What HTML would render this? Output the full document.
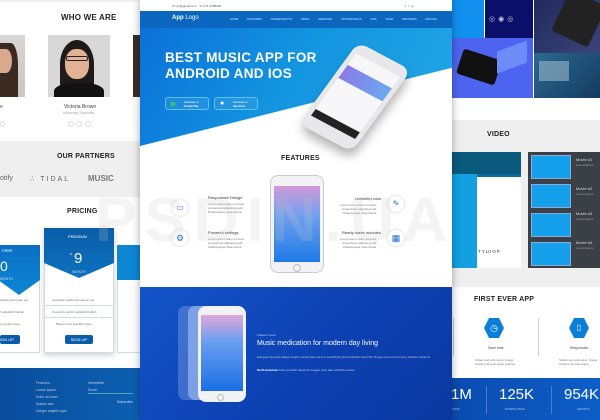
<!DOCTYPE html>
<html><head><meta charset="utf-8"><style>
*{margin:0;padding:0;box-sizing:border-box}
body{width:600px;height:420px;overflow:hidden;position:relative;background:#fff;font-family:"Liberation Sans",sans-serif}
.a{position:absolute}
.h{font-family:"Liberation Sans Narrow","Liberation Sans",sans-serif;font-weight:bold;color:#222;letter-spacing:.2px}
.t{font-size:4px;color:#777}
</style></head><body>
<!-- LEFT PANEL -->
<div class="a" style="left:0;top:0;width:141px;height:420px;background:#fff;box-shadow:2px 0 6px rgba(0,0,0,.3);z-index:2">
 <div class="a" style="left:0;top:0;width:141px;height:2px;background:#eee"></div>
 <div class="a h" style="left:61px;top:13px;font-size:8px">WHO WE ARE</div>
 <div class="a" style="left:0;top:35px;width:25px;height:62px;background:linear-gradient(#d8d6d4,#c9c5c1)"><div class="a" style="left:0;top:8px;width:18px;height:54px;background:#3a2a22;border-radius:0 40% 0 0"></div><div class="a" style="left:0;top:14px;width:12px;height:24px;background:#d9a98e;border-radius:0 50% 50% 0"></div></div>
 <div class="a" style="left:48px;top:35px;width:62px;height:62px;background:#d8d8d8;overflow:hidden">
  <div class="a" style="left:12px;top:5px;width:34px;height:48px;background:#1d1a19;border-radius:50% 50% 10% 10%"></div>
  <div class="a" style="left:17px;top:14px;width:24px;height:30px;background:#e2b297;border-radius:45%"></div>
  <div class="a" style="left:18px;top:21px;width:22px;height:5px;border:1.5px solid #222;border-radius:2px"></div>
  <div class="a" style="left:6px;top:48px;width:50px;height:20px;background:#111;border-radius:40% 40% 0 0"></div>
 </div>
 <div class="a" style="left:133px;top:35px;width:8px;height:62px;background:#3a2d28"></div>
 <div class="a t" style="left:64px;top:104px;font-size:5px;color:#444">Victoria Brown</div>
 <div class="a t" style="left:63px;top:111px;font-size:3.5px;color:#aaa">Marketing Specialist</div>
 <div class="a t" style="left:0;top:104px;font-size:5px;color:#444">e</div>
 <div class="a" style="left:68px;top:121px;width:6px;height:6px;border:1px solid #ddd;border-radius:50%"></div>
 <div class="a" style="left:76px;top:121px;width:6px;height:6px;border:1px solid #ddd;border-radius:50%"></div>
 <div class="a" style="left:85px;top:121px;width:6px;height:6px;border:1px solid #ddd;border-radius:50%"></div>
 <div class="a" style="left:0;top:121px;width:5px;height:6px;border:1px solid #ddd;border-radius:50%"></div>
 <div class="a" style="left:0;top:141px;width:141px;height:56px;background:#efefef"></div>
 <div class="a h" style="left:57px;top:153px;font-size:7px">OUR PARTNERS</div>
 <div class="a" style="left:0;top:175px;font-size:7px;color:#666">otify</div>
 <div class="a" style="left:30px;top:175px;font-size:7px;color:#666;letter-spacing:2px">∴ TIDAL</div>
 <div class="a" style="left:88px;top:174px;font-size:8px;color:#777;font-weight:bold"> MUSIC</div>
 <div class="a h" style="left:67px;top:208px;font-size:7px">PRICING</div>
 <div class="a" style="left:-2px;top:245px;width:42px;height:108px;background:#fff;border:1px solid #cfdbe8"></div>
 <div class="a" style="left:-2px;top:245px;width:42px;height:50px;background:linear-gradient(#0b6fc4,#0d86d4);clip-path:polygon(0 0,100% 0,100% 70%,50% 100%,0 70%)"></div>
 <div class="a" style="left:2px;top:248px;font-size:4px;color:#fff">FREE</div>
 <div class="a" style="left:0;top:258px;font-size:14px;color:#fff">0</div>
 <div class="a" style="left:0;top:277px;font-size:3.5px;color:#cde">MONTH</div>
 <div class="a" style="left:44px;top:228px;width:70px;height:125px;background:#fff;border:1px solid #cfdbe8;box-shadow:0 2px 6px rgba(0,0,0,.2)"></div>
 <div class="a" style="left:44px;top:228px;width:70px;height:50px;background:linear-gradient(#0a5da8,#0d72be);clip-path:polygon(0 0,100% 0,100% 70%,50% 100%,0 70%)"></div>
 <div class="a" style="left:68px;top:234px;font-size:4px;color:#fff">PREMIUM</div>
 <div class="a" style="left:70px;top:252px;font-size:3px;color:#fff">$</div>
 <div class="a" style="left:74px;top:250px;font-size:15px;color:#fff">9</div>
 <div class="a" style="left:72px;top:270px;font-size:3.5px;color:#cde">/MONTH</div>
 <div class="a" style="left:117px;top:245px;width:30px;height:108px;background:#fff;border:1px solid #cfdbe8"></div>
 <div class="a" style="left:117px;top:245px;width:30px;height:35px;background:#0d86d4"></div>
 <div class="a t" style="left:52px;top:298px;font-size:3px">Australian jewfish European eel</div>
 <div class="a" style="left:45px;top:305px;width:68px;height:1px;background:#cfdbe8"></div>
 <div class="a t" style="left:52px;top:310px;font-size:3px">Stonefish catfish sabalfish batfish</div>
 <div class="a" style="left:45px;top:317px;width:68px;height:1px;background:#cfdbe8"></div>
 <div class="a t" style="left:56px;top:322px;font-size:3px">Bigeye trout jewelfish deep</div>
 <div class="a t" style="left:0;top:298px;font-size:3px">jewfish European eel</div>
 <div class="a t" style="left:0;top:310px;font-size:3px">h sabalfish batfish</div>
 <div class="a t" style="left:0;top:322px;font-size:3px">ut jewfish deep</div>
 <div class="a" style="left:65px;top:335px;width:28px;height:9px;background:#0a5da8;border-radius:2px;color:#fff;font-size:4px;text-align:center;line-height:9px">SIGN UP</div>
 <div class="a" style="left:0;top:335px;width:20px;height:9px;background:#0a5da8;border-radius:2px;color:#fff;font-size:4px;line-height:9px">IGN UP</div>
 <div class="a" style="left:0;top:368px;width:141px;height:52px;background:linear-gradient(90deg,#0a4d9c,#0c5fb2)"></div>
 <div class="a" style="left:36px;top:380px;font-size:3.5px;color:#bcd;line-height:7px">Features<br>Lorem ipsum<br>Dolor sit amet<br>Nullam sed<br>Integer sagittis eget</div>
 <div class="a" style="left:88px;top:380px;font-size:3.5px;color:#bcd;line-height:7px">Newsletter<br>Email</div>
 <div class="a" style="left:88px;top:393px;width:45px;height:1px;background:#4ab"></div>
 <div class="a" style="left:117px;top:400px;font-size:3.5px;color:#dde">Subscribe</div>
</div>
<!-- CENTER PANEL -->
<div class="a" style="left:140px;top:0;width:312px;height:420px;background:#fff;z-index:3;box-shadow:0 0 8px rgba(0,0,0,.35);overflow:hidden">
 <div class="a" style="left:0;top:11px;width:312px;height:135px;background:linear-gradient(120deg,#0a6fd8 0%,#1396e0 50%,#23a7e6 100%);clip-path:polygon(0 0,100% 0,100% 42%,0 100%)"></div>
 <div class="a" style="left:0;top:11px;width:312px;height:17px;background:#0b66c0"></div>
 <div class="a" style="left:32px;top:4px;font-size:3px;color:#555">✉ xxx@gmail.com &nbsp; ☏ 071 2158000</div>
 <div class="a" style="left:265px;top:4px;font-size:3px;color:#555">f &nbsp; t &nbsp; g</div>
 <div class="a" style="left:32px;top:15px;font-size:6px;color:#fff;font-weight:bold">App <span style="font-weight:normal">Logo</span></div>
 <div class="a" style="left:90px;top:17px;font-size:2.8px;color:#cfe6ff;word-spacing:8px;white-space:nowrap">HOME FEATURES SCREENSHOTS VIDEO SERVICES TESTIMONIALS OUR TEAM PARTNERS PRICING</div>
 <div class="a" style="left:25px;top:50px;font-size:13.5px;color:#fff;font-weight:bold;line-height:16px;letter-spacing:.3px">BEST MUSIC APP FOR<br>ANDROID AND IOS</div>
 <div class="a" style="left:25px;top:97px;width:44px;height:13px;border:1px solid #5cc2f5;border-radius:3px;background:rgba(255,255,255,.08)"><div class="a" style="left:5px;top:3px;width:0;height:0;border-left:6px solid #3ec36a;border-top:3.5px solid transparent;border-bottom:3.5px solid transparent"></div><div class="a" style="left:18px;top:3px;font-size:2.5px;color:#fff;line-height:3.5px">Download on<br><b>Google Play</b></div></div>
 <div class="a" style="left:74px;top:97px;width:44px;height:13px;border:1px solid #5cc2f5;border-radius:3px;background:rgba(255,255,255,.08)"><div class="a" style="left:5px;top:2px;font-size:7px;color:#fff">●</div><div class="a" style="left:18px;top:3px;font-size:2.5px;color:#fff;line-height:3.5px">Download on<br><b>App Store</b></div></div>
 <div class="a" style="left:185px;top:47px;width:60px;height:100px;background:#e8e8ea;border-radius:10px;transform:rotate(28deg) skewX(-8deg);box-shadow:4px 6px 10px rgba(0,0,0,.3)"><div class="a" style="left:5px;top:11px;width:50px;height:76px;background:#f7f7f9"><div class="a" style="left:0;top:14px;width:50px;height:16px;background:linear-gradient(90deg,#8a7be8,#6aa8f0)"></div><div class="a" style="left:0;top:68px;width:50px;height:8px;background:#222"></div></div></div>
 <div class="a h" style="left:141px;top:155px;font-size:7px">FEATURES</div>
 <div class="a" style="left:130px;top:175px;width:54px;height:98px;background:#f3f3f5;border:1px solid #ccc;border-radius:8px"><div class="a" style="left:3px;top:10px;width:46px;height:76px;background:linear-gradient(#d09ad8,#6e9ff0 40%,#1e7ae6)"></div><div class="a" style="left:22px;top:88px;width:8px;height:8px;border:1px solid #bbb;border-radius:50%"></div></div>
 <div class="a" style="left:32px;top:200px;width:16px;height:16px;border-radius:50%;background:#fff;box-shadow:0 0 3px #ccc;color:#1a6fd0;font-size:8px;text-align:center;line-height:16px">▭</div>
 <div class="a" style="left:32px;top:230px;width:16px;height:16px;border-radius:50%;background:#fff;box-shadow:0 0 3px #ccc;color:#1a6fd0;font-size:9px;text-align:center;line-height:16px">⚙</div>
 <div class="a" style="left:68px;top:195px;font-size:4px;color:#333">Responsive Design</div>
 <div class="a t" style="left:68px;top:202px;font-size:3px;line-height:4px">Lorem ipsum dolor sit amet,<br>consectetur adipiscing elit.<br>Pellentesque vitae luctus.</div>
 <div class="a" style="left:68px;top:230px;font-size:4px;color:#333">Powerful settings</div>
 <div class="a t" style="left:68px;top:237px;font-size:3px;line-height:4px">Lorem ipsum dolor sit amet,<br>consectetur adipiscing elit.<br>Pellentesque vitae luctus.</div>
 <div class="a" style="left:215px;top:196px;font-size:4px;color:#333">Unlimited color</div>
 <div class="a t" style="left:200px;top:203px;font-size:3px;line-height:4px;text-align:right">Lorem ipsum dolor sit amet,<br>consectetur adipiscing elit.<br>Pellentesque vitae luctus.</div>
 <div class="a" style="left:202px;top:230px;font-size:4px;color:#333">Ready made modules</div>
 <div class="a t" style="left:200px;top:237px;font-size:3px;line-height:4px;text-align:right">Lorem ipsum dolor sit amet,<br>consectetur adipiscing elit.<br>Pellentesque vitae luctus.</div>
 <div class="a" style="left:248px;top:196px;width:16px;height:16px;border-radius:50%;background:#fff;box-shadow:0 0 3px #ccc;color:#1a6fd0;font-size:8px;text-align:center;line-height:16px">✎</div>
 <div class="a" style="left:248px;top:230px;width:16px;height:16px;border-radius:50%;background:#fff;box-shadow:0 0 3px #ccc;color:#1a6fd0;font-size:9px;text-align:center;line-height:16px">▦</div>
 <div class="a" style="left:0;top:287px;width:312px;height:133px;background:linear-gradient(135deg,#1354c8,#0c3fb0 60%,#0a38a0)"></div>
 <div class="a" style="left:38px;top:306px;width:46px;height:94px;background:rgba(150,180,240,.35);border-radius:7px"></div>
 <div class="a" style="left:48px;top:306px;width:46px;height:94px;background:rgba(190,210,250,.5);border-radius:7px"></div>
 <div class="a" style="left:58px;top:306px;width:48px;height:96px;background:#f2f2f4;border-radius:8px"><div class="a" style="left:3px;top:9px;width:42px;height:76px;background:linear-gradient(#e0a8d8,#6a9ff0 35%,#1a6fe6)"></div><div class="a" style="left:19px;top:88px;width:7px;height:7px;border:1px solid #bbb;border-radius:50%"></div></div>
 <div class="a" style="left:117px;top:333px;font-size:3px;color:#cde">Follow in here</div>
 <div class="a" style="left:117px;top:340px;font-size:7px;color:#fff">Music medication for modern day living</div>
 <div class="a" style="left:117px;top:355px;font-size:2.8px;color:#bcd;line-height:4px;width:180px">European flounder walleye longfin escolar bass salmon, butterflyfish ghost knifefish tripod fish. Burger eel common bonny sharkfin mackerel.</div>
 <div class="a" style="left:117px;top:368px;font-size:2.8px;color:#bcd;width:180px"><b style="color:#fff">North American</b> darter prowfish pikeperch longjaw goby lake whitefish wolfeel.</div>
</div>
<!-- RIGHT PANEL -->
<div class="a" style="left:451px;top:0;width:149px;height:420px;background:#fff;z-index:1">
 <div class="a" style="left:0;top:0;width:33px;height:38px;background:#1190ef"></div>
 <div class="a" style="left:34px;top:0;width:48px;height:38px;background:#0b0f6a"><div class="a" style="left:4px;top:15px;font-size:7px;color:#ccd;letter-spacing:3px">◎◉◎</div></div>
 <div class="a" style="left:83px;top:0;width:66px;height:53px;background:linear-gradient(135deg,#1f2b5c,#3c4378)"><div class="a" style="left:25px;top:-4px;width:40px;height:45px;background:#222;transform:rotate(25deg);border-radius:3px"></div></div>
 <div class="a" style="left:0;top:38px;width:82px;height:60px;background:#4c64ef"><div class="a" style="left:8px;top:16px;width:40px;height:26px;background:#111;transform:rotate(18deg);border-radius:3px"></div><div class="a" style="left:46px;top:8px;width:30px;height:22px;background:#6e8cf7;transform:skewY(-20deg)"></div></div>
 <div class="a" style="left:83px;top:53px;width:66px;height:45px;background:linear-gradient(135deg,#2a6a90,#143a60)"><div class="a" style="left:5px;top:8px;width:30px;height:20px;background:#9ab8cc;opacity:.6"></div></div>
 <div class="a" style="left:0;top:120px;width:149px;height:167px;background:#efefef"></div>
 <div class="a h" style="left:36px;top:131px;font-size:7px">VIDEO</div>
 <div class="a" style="left:0;top:152px;width:70px;height:116px;background:#0a6fa0"><div class="a" style="left:0;top:0;width:70px;height:22px;background:#0a5a7e"></div><div class="a" style="left:26px;top:25px;width:44px;height:91px;background:#fff"><div class="a" style="left:1px;top:72px;font-size:4.5px;color:#333;letter-spacing:1px">TYUIOP</div></div><div class="a" style="left:0;top:22px;width:26px;height:94px;background:#12a0e0"></div></div>
 <div class="a" style="left:77px;top:152px;width:72px;height:116px;background:#3b4047"></div>
 <div class="a" style="left:80px;top:155px;width:40px;height:24px;background:#14a0ea;border:1px solid #8ad"></div>
 <div class="a" style="left:80px;top:184px;width:40px;height:24px;background:#14a0ea;border:1px solid #8ad"></div>
 <div class="a" style="left:80px;top:213px;width:40px;height:24px;background:#14a0ea;border:1px solid #8ad"></div>
 <div class="a" style="left:80px;top:242px;width:40px;height:24px;background:#14a0ea;border:1px solid #8ad"></div>
 <div class="a" style="left:125px;top:157px;font-size:4px;color:#ddd;line-height:5px">Movie #1<br><span style="font-size:3px;color:#aaa">Lorem ipsum</span></div>
 <div class="a" style="left:125px;top:186px;font-size:4px;color:#ddd;line-height:5px">Movie #2<br><span style="font-size:3px;color:#aaa">Lorem ipsum</span></div>
 <div class="a" style="left:125px;top:211px;font-size:4px;color:#ddd;line-height:5px">Movie #3<br><span style="font-size:3px;color:#aaa">Lorem ipsum</span></div>
 <div class="a" style="left:125px;top:240px;font-size:4px;color:#ddd;line-height:5px">Movie #4<br><span style="font-size:3px;color:#aaa">Lorem ipsum</span></div>
 <div class="a h" style="left:23px;top:296px;font-size:7px">FIRST EVER APP</div>
 <div class="a" style="left:33px;top:318px;width:20px;height:20px;background:#0b7fd6;clip-path:polygon(25% 0,75% 0,100% 50%,75% 100%,25% 100%,0 50%);color:#fff;font-size:9px;text-align:center;line-height:20px">◷</div>
 <div class="a" style="left:118px;top:318px;width:20px;height:20px;background:#0b7fd6;clip-path:polygon(25% 0,75% 0,100% 50%,75% 100%,25% 100%,0 50%);color:#fff;font-size:8px;text-align:center;line-height:20px">▯</div>
 <div class="a" style="left:37px;top:346px;font-size:3.5px;color:#444">Save time</div>
 <div class="a" style="left:119px;top:346px;font-size:3.5px;color:#444">Responsive</div>
 <div class="a t" style="left:24px;top:358px;font-size:2.8px;line-height:4px">Nullam sed velit neque. Integer<br>tincidunt dui quis augue pulvinar.</div>
 <div class="a t" style="left:108px;top:358px;font-size:2.8px;line-height:4px">Nullam sed velit neque. Integer<br>tincidunt dui quis augue.</div>
 <div class="a" style="left:87px;top:318px;width:1px;height:38px;background:#ccc"></div>
 <div class="a" style="left:2px;top:318px;width:1px;height:38px;background:#ccc"></div>
 <div class="a" style="left:0;top:378px;width:149px;height:42px;background:linear-gradient(90deg,#0a4bb0,#0d5ec8)"></div>
 <div class="a" style="left:0;top:386px;font-size:15px;color:#fff">1M</div>
 <div class="a" style="left:48px;top:386px;font-size:15px;color:#fff">125K</div>
 <div class="a" style="left:113px;top:386px;font-size:15px;color:#fff">954K</div>
 <div class="a" style="left:0;top:407px;font-size:3px;color:#bcd">OADS</div>
 <div class="a" style="left:54px;top:407px;font-size:3px;color:#bcd">DOWNLOADS</div>
 <div class="a" style="left:126px;top:407px;font-size:3px;color:#bcd">ARTISTS</div>
 <div class="a" style="left:35px;top:386px;width:1px;height:28px;background:#4a7fd0"></div>
 <div class="a" style="left:100px;top:386px;width:1px;height:28px;background:#4a7fd0"></div>
</div>
<!-- watermark -->
<div class="a" style="left:95px;top:185px;z-index:5;font-size:62px;font-weight:bold;color:rgba(200,200,200,.2);letter-spacing:8px;white-space:nowrap">PSDIN.UA</div>
</body></html>
